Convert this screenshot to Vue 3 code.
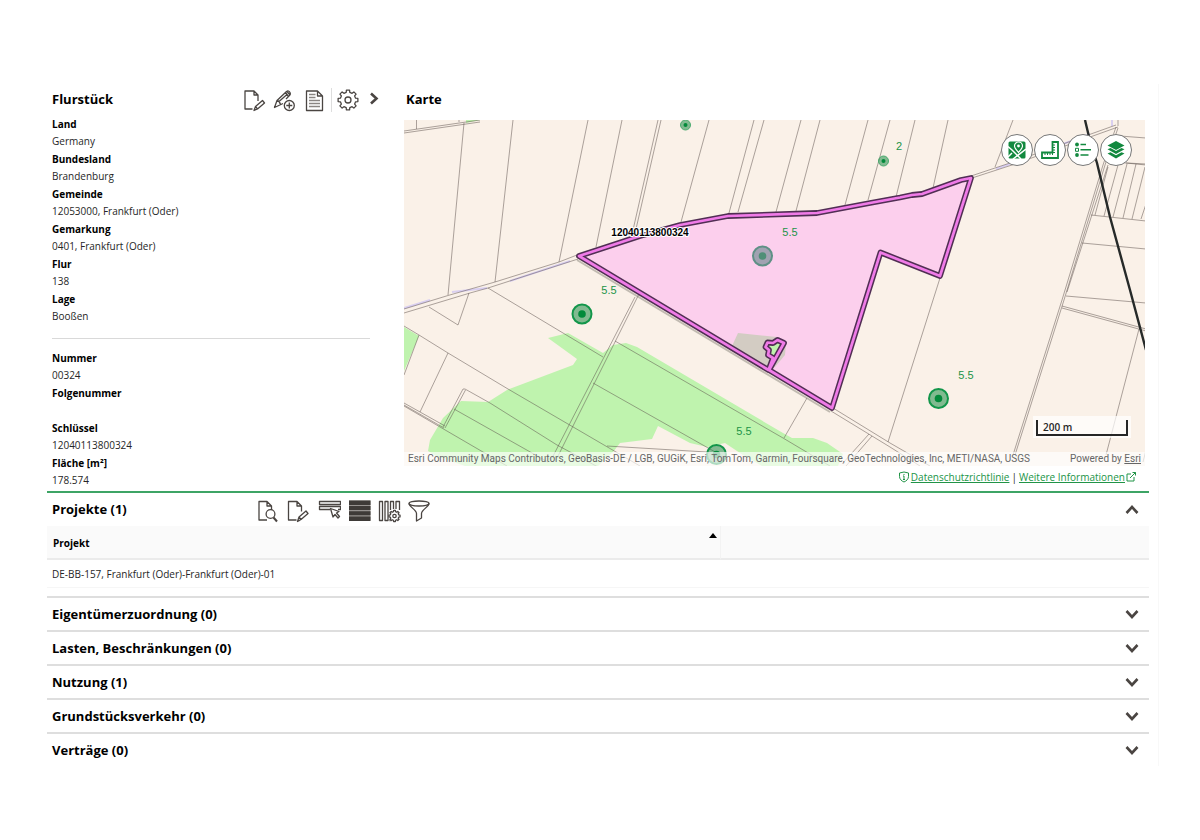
<script setup>
import { ref } from 'vue'

const location = [
  { label: 'Land', value: 'Germany' },
  { label: 'Bundesland', value: 'Brandenburg' },
  { label: 'Gemeinde', value: '12053000, Frankfurt (Oder)' },
  { label: 'Gemarkung', value: '0401, Frankfurt (Oder)' },
  { label: 'Flur', value: '138' },
  { label: 'Lage', value: 'Booßen' }
]
const details = [
  { label: 'Nummer', value: '00324' },
  { label: 'Folgenummer', value: '' },
  { label: 'Schlüssel', value: '12040113800324' },
  { label: 'Fläche [m²]', value: '178.574' }
]
const sections = [
  'Eigentümerzuordnung (0)',
  'Lasten, Beschränkungen (0)',
  'Nutzung (1)',
  'Grundstücksverkehr (0)',
  'Verträge (0)'
]
const projectsOpen = ref(true)

function gear(cx, cy, outer, inner, teeth) {
  const step = (Math.PI * 2) / teeth
  const points = []
  for (let i = 0; i < teeth; i++) {
    const a = i * step - Math.PI / 2
    for (const [r, f] of [[inner, -0.3], [outer, -0.2], [outer, 0.2], [inner, 0.3]]) {
      points.push(`${(cx + r * Math.cos(a + f * step)).toFixed(2)} ${(cy + r * Math.sin(a + f * step)).toFixed(2)}`)
    }
  }
  return `M${points.join('L')}Z`
}

const boundaries = [
  'M404 131L480 120M404 133L480 122M416.500 120V129M459 120V122',
  'M464 123L448 295M513 120L495 282M588 120L559 262M622 120L596 247',
  'M658 120L633 230M661 120L636 229M709 120L681 222M754 120L729 213M764 120L738 212',
  'M801 120L776 212M820 120L796 211M868 120L845 205M890 120L868 200M915 120L896 197M948 120L933 188M1013 120L995 167',
  'M404 309L448 295.500L495 282L559 262L577 255M404 313L470 293L488 288L578 259',
  'M429 307L458 325L469 293M488 288L603 357',
  'M404 326L419 335L448 353L508 389L568 424L640 466M419 335L404 375M448 353L420 412',
  'M404 403L445 426M404 405L444 428M404 406L507 466M463 389L443 427M465.500 390L445 428M463 389H465L490 403L557 445L598 467M454 409L548 462',
  'M635 297L551 460M639 294L556 460M615 341L783 438L830 466M593 383L717 453M607 446L707 452',
  'M807 398L784 438M833 408L890 443L930 466M831 411L890 447L920 466M869 434L842 464M872 436L846 466M940 278L888 442',
  'M971 176L1010 163L1116 125M972 178L1012 165L1118 127M1118 120V126',
  'M1116 127L1103 165L1062 300L1013 455M1118 128L1105 165L1064 300L1015 455M1108 165L1067 292',
  'M1120 136L1146 138M1107 162L1146 164M1126 163L1146 165M1108 167L1095 215M1118 165L1104 216M1127 164L1113 217M1136 164L1123 218M1145 167L1132 219M1146 204L1141 219',
  'M1091 215L1146 221M1082 243L1146 249M1066 296L1146 303M1062 306L1146 329M1062 308L1146 331M1139 329L1106 455M1146 450L1143 462'
].join('')
const parcel =
  'M579 256L640 236L680 225L728 216L817 213L870 203L900 197.500L912 195L922 194L961 180L971 178L940 276L880.500 252.500L832 408L769 370L784 343L777.500 340L773 343L767.500 342.500L765.500 347L769 350L768 355L773 358L768.500 370Z'
const hole = 'M784 343L777.500 340L773 343L767.500 342.500L765.500 347L769 350L768 355L773 358Z'
const sites = [
  { x: 762.5, y: 256, big: true, muted: true, label: '5.5', lx: 790, ly: 236 },
  { x: 582, y: 314, big: true, label: '5.5', lx: 609, ly: 294 },
  { x: 938.5, y: 398.5, big: true, label: '5.5', lx: 966, ly: 379 },
  { x: 716.5, y: 454.5, big: true, label: '5.5', lx: 744, ly: 435 },
  { x: 883.5, y: 161, big: false, label: '2', lx: 899, ly: 150 },
  { x: 685.5, y: 125, big: false, label: '', lx: 0, ly: 0 }
]
</script>

<template>
  <main class="page">
    <div class="sheet">
      <div class="overview">
        <section class="parcel">
          <header class="bar">
            <h1>Flurstück</h1>
            <div class="tools">
              <button type="button" aria-label="Bearbeiten">
                <svg viewBox="0 0 24 24"><path d="M9.500 21H2V3h9l4 4v6M11 3v4h4M11 22.500l1.500-4 7-6 2 2.500-7 6zM12.500 18.500l2 2.500M11 22.500l2-1" /></svg>
              </button>
              <button type="button" aria-label="Zeichnung hinzufügen">
                <svg viewBox="0 0 24 24"><path d="M10 15.500L1.500 19.500 4 12.500 13.500 3.500Q15.500 2 17 4.500 18 6.500 16 8L13 11M4 12.500q2.500.5 3.500 4M12.500 4.500l3 4M14 3.500l3 3.500M6 13.500l8-7" /><circle cx="16.300" cy="17.500" r="5" /><path d="M16.300 14.500v6M13.300 17.500h6" /></svg>
              </button>
              <button type="button" aria-label="Bericht">
                <svg viewBox="0 0 24 24"><path d="M3.500 3h11l5 5v14.500h-16zM14.500 3v5h5" /><path class="hair" d="M6 6.500h6.500M6 9.500h6.500M6 12.500h11M6 15.500h11M6 18.500h11" /></svg>
              </button>
            </div>
            <div class="tools tools-more">
              <button type="button" aria-label="Einstellungen">
                <svg viewBox="0 0 24 24"><path :d="gear(12, 12, 10, 7.8, 8)" /><circle cx="12" cy="12" r="3" /></svg>
              </button>
              <button type="button" aria-label="Einklappen">
                <svg viewBox="0 0 24 24"><path class="bold" d="M9 5.500l5.500 5-5.500 5" /></svg>
              </button>
            </div>
          </header>
          <dl>
            <div v-for="f in location" :key="f.label"><dt>{{ f.label }}</dt><dd>{{ f.value }}</dd></div>
          </dl>
          <hr />
          <dl>
            <div v-for="f in details" :key="f.label"><dt>{{ f.label }}</dt><dd>{{ f.value }}</dd></div>
          </dl>
        </section>

        <section class="map-panel">
          <header class="bar"><h1>Karte</h1></header>
          <div class="map">
            <svg class="canvas" viewBox="404 120 741 346" preserveAspectRatio="xMidYMid slice" role="img" aria-label="Karte des Flurstücks">
              <rect x="300" y="0" width="1000" height="600" fill="#faf1e8" />
              <g fill="#bff3ae">
                <path d="M404 327L419 336L404 371ZM466 123L480 120H466Z" />
                <path d="M548 338L568 333L603 353L613 345L626 343L637 347L783 433L792 438L813 438L827 443L843 454L838 466H762L743 455L725 443L707 447L690 443L658 426L652 439L620 443L613 452L598 466H465L436 456L428 451L430 440L443 418L461 401L488 402L507 390L573 365L577 359Z" />
              </g>
              <g fill="none" stroke="#d9cff0" stroke-width="2">
                <path d="M404 308L430 300M452 292L487 288M510 281L570 261M996 169L1010 164M1063 144L1090 134M1112 120V126" />
              </g>
              <path :d="boundaries" fill="none" stroke="#5b4f4b" stroke-opacity="0.5" stroke-width="1" />
              <path d="M1085 120L1090 141L1097 163L1110 217L1130 290L1146 350" fill="none" stroke="#262a29" stroke-width="2.400" />
              <path d="M577 260L830 412" stroke="#6b6a60" stroke-opacity="0.4" stroke-width="2" />
              <path :d="parcel" fill="#fccfed" />
              <path d="M738 333L732 346L769 369L775 367L785 355L786 344L777 337Z" fill="#d3ccc3" />
              <path :d="hole" fill="#bff3ae" />
              <path :d="parcel" fill="none" stroke="#512e54" stroke-width="5.800" stroke-linejoin="round" />
              <path :d="parcel" fill="none" stroke="#f07be8" stroke-width="2.700" stroke-linejoin="round" />
              <g v-for="(s, i) in sites" :key="i" :class="['site', { muted: s.muted, small: !s.big }]">
                <circle :cx="s.x" :cy="s.y" :r="s.big ? 9.5 : 5" class="ring" />
                <circle :cx="s.x" :cy="s.y" :r="s.big ? 3.8 : 2" class="dot" />
                <text v-if="s.label" :x="s.lx" :y="s.ly">{{ s.label }}</text>
              </g>
              <text x="650" y="236" class="parcel-no">12040113800324</text>
            </svg>

            <div class="widgets">
              <button type="button" aria-label="Grundkarte">
                <svg viewBox="0 0 18 18"><rect x=".5" y=".5" width="17" height="17" rx="1.500" fill="#12893f" /><path d="M0 5.500L4 9l9 9M18 8L5 18M0 16l4-4" fill="none" stroke="#fff" stroke-width="1.500" /><path d="M10.500 11.500C8 8.500 6.500 7 6.500 5a4 4 0 0 1 8 0c0 2-1.500 3.500-4 6.500z" fill="#12893f" stroke="#fff" stroke-width="1.200" /><circle cx="10.500" cy="5" r="1.400" fill="#fff" /></svg>
              </button>
              <button type="button" aria-label="Messen">
                <svg viewBox="0 0 18 18"><path d="M11.500 1h5.500v16H1v-5.500h10.500z" fill="none" stroke="#12893f" stroke-width="1.800" /><path d="M12 4h2M12 6.500h2M12 9h2M12 11.500h2M4 12v2M6.500 12v2M9 12v2M11.500 12v2" stroke="#12893f" stroke-width="1" /></svg>
              </button>
              <button type="button" aria-label="Legende">
                <svg viewBox="0 0 18 18"><circle cx="3" cy="3.500" r="1.900" fill="#12893f" /><circle cx="3" cy="14" r="1.900" fill="#12893f" /><path d="M1.500 7.300h3v3h-3z" fill="none" stroke="#12893f" /><path d="M6.500 3.500H12M6.500 8.800H17M6.500 14h8" stroke="#12893f" stroke-width="1.500" /></svg>
              </button>
              <button type="button" aria-label="Ebenen">
                <svg viewBox="0 0 18 18" fill="#12893f"><path d="M9 0l8.500 4.500L9 9 .5 4.500zM.5 8.300l3-1.300L9 9.900 14.500 7l3 1.300L9 13zM.5 12.600l3-1.300L9 14.200l5.500-2.900 3 1.300L9 17.500z" /></svg>
              </button>
            </div>
            <div class="scale"><span>200 m</span></div>
            <div class="credits">
              <span>Esri Community Maps Contributors, GeoBasis-DE / LGB, GUGiK, Esri, TomTom, Garmin, Foursquare, GeoTechnologies, Inc, METI/NASA, USGS</span>
              <span>Powered by <a href="#">Esri</a></span>
            </div>
          </div>
          <footer class="legal">
            <svg viewBox="0 0 12 12"><path d="M6 1l4.500 1v3.500c0 2.500-2 4.500-4.500 5.500-2.500-1-4.500-3-4.500-5.500V2zM6 5v3.500M5 5h1M5 8.500h2M6 3v1" /></svg>
            <a href="#">Datenschutzrichtlinie</a><i>|</i><a href="#">Weitere Informationen</a>
            <svg viewBox="0 0 12 12"><path d="M6 3H2v7h7V6M5 7l5.500-5.500M7.500 1.500h3v3" /></svg>
          </footer>
        </section>
      </div>

      <section class="projects">
        <header class="bar">
          <h2>Projekte (1)</h2>
          <div class="tools">
            <button type="button" aria-label="Anzeigen">
              <svg viewBox="0 0 24 24"><path d="M10 21H2V2.500h8l4.500 4.500v4M10 2.500V7h4.500" /><circle cx="13.500" cy="15" r="4.400" /><path class="thick" d="M16.500 18.500l3.500 4" /></svg>
            </button>
            <button type="button" aria-label="Projekt bearbeiten">
              <svg viewBox="0 0 24 24"><path d="M9.500 21H1.500V2.500h8.500l4.500 4.500v5.500M10 2.500V7h4.500M10.500 22.500l1.500-4.500 7-6 2 2.500-7 6zM12 18l2 2.500M10.500 22.500l2-1" /></svg>
            </button>
            <button type="button" aria-label="Auswählen">
              <svg viewBox="0 0 24 24"><path d="M13 10.500H2.500v-3h21v3H21M2.500 2.500h21v3h-21z" /><path d="M13.500 9.500l2.500 8.500 2-2.500 3 3.500 1.500-1.500-3-3.500 2.500-1.500z" /></svg>
            </button>
            <button type="button" aria-label="Zeilenansicht">
              <svg viewBox="0 0 24 24" class="solid"><path fill="#96928f" d="M2 1.500h21.500v20H2z" /><path fill="#3e3a37" d="M2 1.500h21.500V6H2zM2 7h21.500v4H2zM2 12.300h21.500v4H2zM2 17.500h21.500V22H2z" /></svg>
            </button>
            <button type="button" aria-label="Spalten">
              <svg viewBox="0 0 24 24"><path d="M2.500 2.500h3v19h-3zM8 2.500h3v19H8zM13.500 11V2.500h3V10M19 10V2.500h3.500V11M13.500 21.500h-1" /><path :d="gear(17.500, 17, 5.600, 4.400, 8)" /><circle cx="17.500" cy="17" r="1.700" /></svg>
            </button>
            <button type="button" aria-label="Filter">
              <svg viewBox="0 0 24 24"><ellipse cx="12" cy="4.500" rx="10" ry="2.500" /><path d="M2 4.500c0 3 7.500 6.500 7.500 10V22l5-3v-4.500c0-3.500 7.500-7 7.500-10" /></svg>
            </button>
          </div>
          <button type="button" class="toggle" aria-label="Projekte ein- oder ausklappen" :aria-expanded="projectsOpen" @click="projectsOpen = !projectsOpen">
            <svg viewBox="0 0 24 24"><path class="bold" d="M6.500 15l5.500-6 5.500 6" /></svg>
          </button>
        </header>
        <table v-if="projectsOpen">
          <thead>
            <tr>
              <th scope="col" class="sorted" aria-sort="ascending">Projekt<svg viewBox="0 0 8 5"><path d="M4 0l4 5H0z" /></svg></th>
              <th scope="col"></th>
            </tr>
          </thead>
          <tbody>
            <tr><td>DE-BB-157, Frankfurt (Oder)-Frankfurt (Oder)-01</td><td></td></tr>
          </tbody>
        </table>
      </section>

      <section v-for="s in sections" :key="s" class="folded">
        <h2>{{ s }}</h2>
        <button type="button" class="toggle" :aria-label="s + ' ausklappen'" aria-expanded="false">
          <svg viewBox="0 0 24 24"><path class="bold" d="M6.500 9l5.500 6 5.500-6" /></svg>
        </button>
      </section>
    </div>
  </main>
</template>

<style>
body {
  background: #fff;
}
</style>

<style scoped>
.page {
  box-sizing: border-box;
  padding: 84px 41px 40px 47px;
  font-family: "Open Sans", "Noto Sans", sans-serif;
  font-size: 10px;
  color: #262626;
}
.sheet {
  padding-right: 9px;
  border-right: 1px solid #f8f8f8;
}
h1,
h2,
dl,
dd {
  margin: 0;
}
h1,
h2 {
  font-size: 13px;
  line-height: 20px;
  font-weight: 700;
  color: #000;
  white-space: nowrap;
}
button {
  display: grid;
  place-items: center;
  box-sizing: border-box;
  width: 24px;
  height: 24px;
  padding: 0;
  border: 0;
  background: none;
  cursor: pointer;
}
.tools svg,
.toggle svg {
  width: 24px;
  height: 24px;
  fill: none;
  stroke: #4a4542;
  stroke-width: 1.3;
  stroke-linejoin: round;
}
.tools svg.solid {
  stroke: none;
}
.tools .hair {
  stroke: #8a8683;
}
.tools .thick {
  stroke-width: 2;
}
.tools .bold,
.toggle .bold {
  stroke-width: 2.6;
  stroke-linejoin: miter;
}
.overview {
  display: grid;
  grid-template-columns: 357px minmax(0, 1fr);
}
.bar {
  display: flex;
  align-items: center;
  height: 31px;
}
.bar h1,
.bar h2 {
  padding-bottom: 2px;
}
.parcel {
  padding: 0 34px 1px 5px;
}
.parcel .bar {
  margin: 0 -16px 1px 0;
}
.parcel h1 {
  margin-right: auto;
}
.tools {
  display: flex;
  gap: 6px;
}
.tools-more {
  gap: 2px;
  margin-left: 4px;
  padding-left: 4px;
  border-left: 1px solid #ddd;
}
dl > div {
  height: 35px;
}
dt {
  line-height: 17px;
  font-weight: 700;
  color: #000;
}
dd {
  line-height: 16px;
}
hr {
  height: 1px;
  margin: 12px 0 11px;
  border: 0;
  background: #d9d9d9;
}
.map-panel {
  display: flex;
  flex-direction: column;
  padding-right: 4px;
}
.map-panel h1 {
  padding-left: 2px;
}
.map-panel .bar {
  margin-bottom: 5px;
}
.map {
  position: relative;
  flex: 1;
  overflow: hidden;
}
.canvas {
  position: absolute;
  width: 100%;
  height: 100%;
}
.site .ring {
  fill: #12893f;
  fill-opacity: 0.52;
  stroke: #12964a;
  stroke-width: 2;
}
.site .dot {
  fill: #038a3b;
}
.site text {
  font: 11px "Liberation Sans", Arial, sans-serif;
  text-anchor: middle;
  fill: #219447;
}
.small .ring {
  stroke: #4aab6f;
  stroke-width: 1;
}
.muted .ring {
  fill: #6f8a91;
  fill-opacity: 0.65;
  stroke: #5f9086;
}
.muted .dot {
  fill: #4f8f77;
}
.parcel-no {
  font: 700 10px "Liberation Sans", Arial, sans-serif;
  text-anchor: middle;
  fill: #000;
  stroke: #fff;
  stroke-width: 2;
  paint-order: stroke;
}
.widgets {
  position: absolute;
  top: 14px;
  right: 13px;
  display: flex;
  gap: 1px;
}
.widgets button {
  width: 32px;
  height: 32px;
  border: 1px solid #777;
  border-radius: 50%;
  background: #fff;
}
.widgets svg {
  width: 18px;
  height: 18px;
}
.scale {
  position: absolute;
  right: 14px;
  bottom: 28px;
  padding: 4px 3px 2px;
  background: rgba(255, 255, 255, 0.7);
}
.scale span {
  display: block;
  box-sizing: border-box;
  width: 92px;
  padding-left: 5px;
  border: solid #262626;
  border-width: 0 2px 2px;
  line-height: 14px;
  font-weight: 600;
}
.credits {
  position: absolute;
  right: 0;
  bottom: 0;
  left: 0;
  display: flex;
  justify-content: space-between;
  padding: 0 4px;
  background: rgba(255, 255, 255, 0.66);
  font-family: Roboto, "Open Sans", sans-serif;
  line-height: 14px;
  color: #666;
  white-space: nowrap;
}
.credits a {
  color: inherit;
}
.legal {
  display: flex;
  align-items: center;
  justify-content: flex-end;
  box-sizing: border-box;
  height: 25px;
  padding: 0 7px 3px 0;
}
.legal a {
  color: #219447;
}
.legal i {
  padding: 0 2px;
  font-style: normal;
}
.legal svg {
  width: 12px;
  height: 12px;
  margin-right: 1px;
  fill: none;
  stroke: #219447;
}
.projects {
  padding-bottom: 8px;
  border-top: 2px solid #3da465;
}
.projects .bar {
  height: 33px;
  padding-left: 5px;
}
.projects h2 {
  width: 205px;
}
.projects .tools {
  padding-top: 3px;
}
.toggle {
  margin: 0 5px 0 auto;
}
table {
  width: 100%;
  border-collapse: separate;
  border-spacing: 0;
  table-layout: fixed;
}
th,
td {
  padding: 0 5px;
  text-align: left;
}
th {
  position: relative;
  height: 30px;
  padding: 2px 6px 0;
  border-bottom: 2px solid #ebebeb;
  background: #fafafa;
  color: #000;
}
.sorted {
  width: 60%;
  border-right: 1px solid #f3f3f3;
}
.sorted svg {
  position: absolute;
  top: 7px;
  right: 3px;
  width: 8px;
  height: 5px;
}
td {
  height: 27px;
  border-bottom: 1px solid #f6f6f6;
}
.folded {
  display: flex;
  align-items: center;
  height: 32px;
  padding-left: 5px;
  border-top: 2px solid #dedede;
}
</style>
